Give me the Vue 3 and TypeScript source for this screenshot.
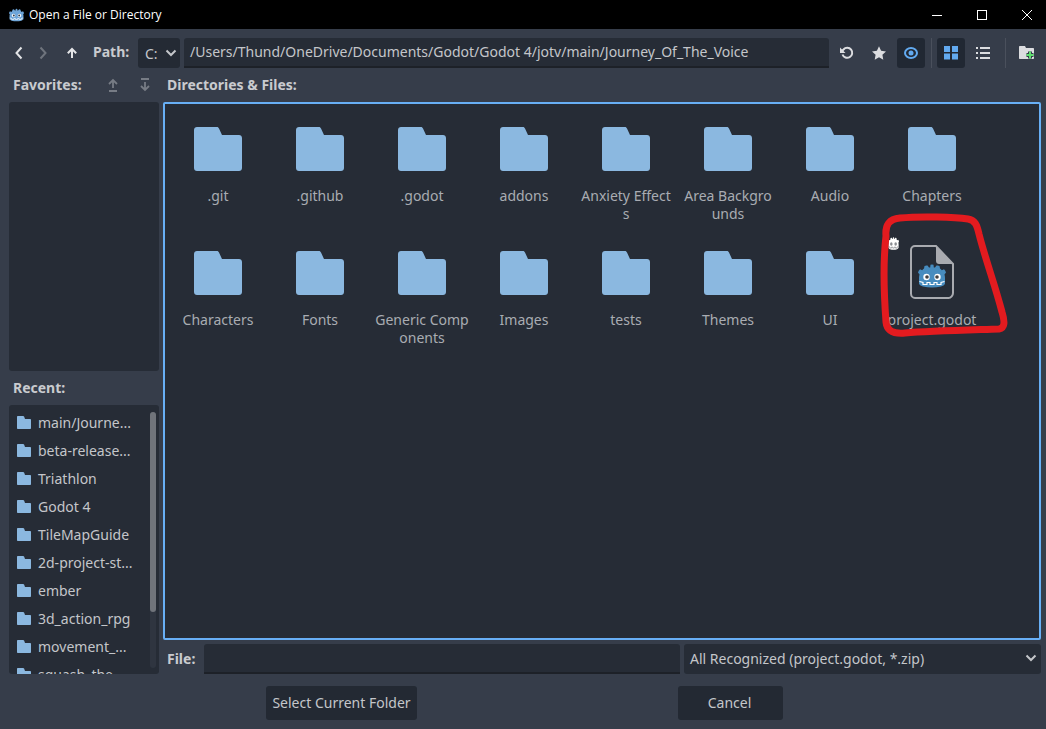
<script setup lang="ts">
const folders = [
  ".git", ".github", ".godot", "addons", "Anxiety Effects", "Area Backgrounds", "Audio", "Chapters",
  "Characters", "Fonts", "Generic Components", "Images", "tests", "Themes", "UI",
];

const recent = [
  "main/Journe...", "beta-release...", "Triathlon", "Godot 4", "TileMapGuide",
  "2d-project-st...", "ember", "3d_action_rpg", "movement_...", "squash_the",
];

const folderPath = "M3 0h20c1 0 1.600.6 2 1.500L28 8h17c1.700 0 3 1.300 3 3v30c0 1.700-1.300 3-3 3H3c-1.700 0-3-1.300-3-3V3c0-1.700 1.300-3 3-3z";
const smallFolderPath = "M1 0h5c.7 0 1 .3 1.200.8L8 3h5c.6 0 1 .4 1 1v8c0 .6-.4 1-1 1H1c-.6 0-1-.4-1-1V1c0-.6.4-1 1-1z";
const godotHead = "M6 4.500L6.500 2Q8 1.200 9.500 1.600L11 3.600L12.200 3.400L12.500 .8Q14 .2 15.500 .8L15.800 3.400L17 3.600L18.500 1.600Q20 1.200 21.500 2L22 4.500Q23 5.300 23.800 6.200L26 5.200Q27.500 6.500 28 8.500L26.500 10.500Q27 12 27 14V20Q26 21.500 23 22.500Q14 24.500 5 22.500Q2 21.500 1 20V14Q1 12 1.500 10.500L0 8.500Q.5 6.500 2 5.200L4.200 6.200Q5 5.300 6 4.500Z";
const godotMouth = "M1.500 17.500L5 18.500V20.500H9V18.500H12V20.500H16V18.500H19V20.500H23V18.500L26.500 17.500";
</script>

<template>
  <div class="window">
    <div class="titlebar">
      <svg class="title-logo" viewBox="0 0 28 24">
        <path :d="godotHead" fill="#6ea5d8" />
        <circle cx="8.500" cy="13" r="3.200" fill="#fff" />
        <circle cx="19.500" cy="13" r="3.200" fill="#fff" />
        <circle cx="9" cy="13" r="1.800" fill="#2a3a4c" />
        <circle cx="19" cy="13" r="1.800" fill="#2a3a4c" />
        <path :d="godotMouth" fill="none" stroke="#fff" stroke-width="1.300" />
      </svg>
      <span class="title-text">Open a File or Directory</span>
      <div class="win-buttons">
        <svg width="12" height="12" viewBox="0 0 12 12"><path d="M1 6.500h10" stroke="#fff" stroke-width="1" /></svg>
        <svg width="12" height="12" viewBox="0 0 12 12"><rect x="1.500" y="1.500" width="9" height="9" fill="none" stroke="#fff" /></svg>
        <svg width="12" height="12" viewBox="0 0 12 12"><path d="M1 1l10 10M11 1L1 11" stroke="#fff" stroke-width="1" /></svg>
      </div>
    </div>

    <div class="toolbar">
      <button class="nav">
        <svg width="10" height="14" viewBox="0 0 10 14"><path d="M7.500 1.500L2.500 7l5 5.500" fill="none" stroke="#e4e5e7" stroke-width="2" /></svg>
      </button>
      <button class="nav">
        <svg width="10" height="14" viewBox="0 0 10 14"><path d="M2.500 1.500l5 5.500-5 5.500" fill="none" stroke="#6f747d" stroke-width="2" /></svg>
      </button>
      <button class="nav up">
        <svg width="12" height="12" viewBox="0 0 12 12"><path d="M6 11V2.500M1.800 6.200L6 2l4.200 4.200" fill="none" stroke="#e4e5e7" stroke-width="2" /></svg>
      </button>
      <span class="label path-label">Path:</span>
      <div class="drive">C:
        <svg width="12" height="8" viewBox="0 0 12 8"><path d="M1.500 1.500L6 6l4.500-4.500" fill="none" stroke="#c4c6ca" stroke-width="2" /></svg>
      </div>
      <div class="input path-input">/Users/Thund/OneDrive/Documents/Godot/Godot 4/jotv/main/Journey_Of_The_Voice</div>
      <button class="tool">
        <svg width="16" height="16" viewBox="0 0 16 16"><path d="M3.500 9.500a5 5 0 1 0 1-5L2.500 6.500" fill="none" stroke="#dcdde0" stroke-width="2" /><path d="M1 2.500v5.500h5.500z" fill="#dcdde0" /></svg>
      </button>
      <button class="tool">
        <svg width="16" height="16" viewBox="0 0 16 16"><path d="M8 1.300l2.100 4.500 4.900.6-3.600 3.400.9 4.900L8 12.300l-4.300 2.400.9-4.900L1 6.400l4.900-.6z" fill="#dcdde0" /></svg>
      </button>
      <button class="tool active">
        <svg width="16" height="14" viewBox="0 0 16 14"><ellipse cx="8" cy="7" rx="6" ry="5" fill="none" stroke="#62aaf0" stroke-width="2" /><circle cx="8" cy="7" r="2.500" fill="#62aaf0" /></svg>
      </button>
      <div class="sep"></div>
      <button class="tool active">
        <svg width="14" height="14" viewBox="0 0 14 14" fill="#62aaf0"><rect width="6" height="6" /><rect x="8" width="6" height="6" /><rect y="7.500" width="6" height="6" /><rect x="8" y="7.500" width="6" height="6" /></svg>
      </button>
      <button class="tool">
        <svg width="14" height="14" viewBox="0 0 14 14" fill="#dcdde0"><rect y="1" width="2" height="2" /><rect x="4" y="1" width="10" height="2" /><rect y="6" width="2" height="2" /><rect x="4" y="6" width="10" height="2" /><rect y="11" width="2" height="2" /><rect x="4" y="11" width="10" height="2" /></svg>
      </button>
      <div class="sep wide"></div>
      <button class="tool">
        <svg width="16" height="14" viewBox="0 0 16 14">
          <path d="M1 0h5l1 2h7c.6 0 1 .4 1 1v9c0 .6-.4 1-1 1H1c-.6 0-1-.4-1-1V1c0-.6.4-1 1-1z" fill="#dcdde0" />
          <path d="M11 5.500v7M7.500 9h7" stroke="#363d4a" stroke-width="4" />
          <path d="M11 5.500v7M7.500 9h7" stroke="#5fe070" stroke-width="2" />
        </svg>
      </button>
    </div>

    <div class="content">
      <div class="side">
        <div class="side-head">
          <span class="label">Favorites:</span>
          <svg class="fav-up" width="12" height="14" viewBox="0 0 12 14"><path d="M6 10V2.500M2 6l4-4 4 4M2 13h8" fill="none" stroke="#777c85" stroke-width="1.800" /></svg>
          <svg class="fav-down" width="12" height="14" viewBox="0 0 12 14"><path d="M6 4v7.500M2 8l4 4 4-4M2 1h8" fill="none" stroke="#777c85" stroke-width="1.800" /></svg>
        </div>
        <div class="panel"></div>
        <div class="side-head"><span class="label">Recent:</span></div>
        <div class="panel recent">
          <div v-for="name in recent" :key="name" class="recent-row">
            <svg width="14" height="13" viewBox="0 0 14 13"><path :d="smallFolderPath" fill="#8bb8e0" /></svg>
            <span>{{ name }}</span>
          </div>
          <div class="scrollbar"><div class="thumb"></div></div>
        </div>
      </div>

      <div class="main">
        <div class="main-head"><span class="label">Directories &amp; Files:</span></div>
        <div class="files">
          <div v-for="name in folders" :key="name" class="file">
            <svg width="48" height="44" viewBox="0 0 48 44"><path :d="folderPath" fill="#8bb8e0" /></svg>
            <div class="file-name">{{ name }}</div>
          </div>
          <div class="file project">
            <svg class="doc" width="44" height="54" viewBox="0 0 44 54">
              <path d="M5 1h21l17 18v29c0 2.500-2 5-4.500 5H5c-2.200 0-4-2-4-4.500V5c0-2.200 1.800-4 4-4z" fill="#262c36" stroke="#a9abb0" stroke-width="2" />
              <path d="M26 1l17 18H29c-1.700 0-3-1.300-3-3z" fill="#a9abb0" />
              <g transform="translate(8 19)">
                <path :d="godotHead" fill="#478cbf" />
                <circle cx="8.500" cy="13" r="3.200" fill="#fff" />
                <circle cx="19.500" cy="13" r="3.200" fill="#fff" />
                <circle cx="9" cy="13" r="1.800" fill="#414042" />
                <circle cx="19" cy="13" r="1.800" fill="#414042" />
                <path :d="godotMouth" fill="none" stroke="#fff" stroke-width="1.200" />
              </g>
            </svg>
            <div class="file-name">project.godot</div>
          </div>
        </div>
        <div class="file-row">
          <span class="label">File:</span>
          <div class="input file-input"></div>
          <div class="filter">
            <span>All Recognized (project.godot, *.zip)</span>
            <svg width="12" height="8" viewBox="0 0 12 8"><path d="M1.500 1.500L6 6l4.500-4.500" fill="none" stroke="#c4c6ca" stroke-width="2" /></svg>
          </div>
        </div>
      </div>
    </div>

    <div class="footer">
      <button class="btn select">Select Current Folder</button>
      <button class="btn cancel">Cancel</button>
    </div>

    <!-- hand-drawn annotation and the stray icon on top of the grid -->
    <svg class="mini-logo" width="11" height="13" viewBox="0 0 28 24" preserveAspectRatio="none">
      <path :d="godotHead" fill="#fff" />
      <circle cx="8.500" cy="13" r="3.200" fill="#8a8d92" />
      <circle cx="19.500" cy="13" r="3.200" fill="#8a8d92" />
      <path :d="godotMouth" fill="none" stroke="#8a8d92" stroke-width="1.500" />
    </svg>
    <svg class="scribble" width="1046" height="729" viewBox="0 0 1046 729">
      <path d="M886 236C885 225 889 219 900 218C920 216 955 217 968 219C975 220 977 225 979 234C985 258 995 285 1002 312C1005 322 1005 328 999 329C970 330 930 331 905 333C893 334 887 331 886 322C884 295 883 262 886 236Z" fill="none" stroke="#e31b1f" stroke-width="7" stroke-linejoin="round" />
    </svg>
  </div>
</template>

<style>
html, body { margin: 0; background: #363d4a; }
</style>

<style scoped>
.window {
  position: relative;
  width: 1046px;
  height: 729px;
  overflow: hidden;
  display: flex;
  flex-direction: column;
  background: #363d4a;
  color: #c4c6ca;
  font: 14px "Noto Sans", sans-serif;
}
button { font: inherit; color: inherit; border: 0; padding: 0; background: none; display: flex; align-items: center; justify-content: center; }

.titlebar { height: 29px; background: #000; display: flex; align-items: center; padding-left: 9px; flex: none; }
.title-logo { width: 15px; height: 14px; }
.title-text { margin-left: 5px; font: 12px "Open Sans", sans-serif; color: #fff; }
.win-buttons { margin-left: auto; display: flex; gap: 33px; padding-right: 13px; }

.toolbar { height: 30px; margin-top: 9px; padding-left: 9px; display: flex; gap: 4px; flex: none; }
.nav { width: 20px; height: 30px; }
.up { margin-left: 4px; width: 22px; }
.label { font-weight: 700; color: #c9cbcf; }
.path-label { margin-left: 6px; line-height: 28px; width: 41px; }
.drive { width: 42px; height: 30px; box-sizing: border-box; background: #242a34; border-radius: 3px; display: flex; align-items: center; padding-left: 7px; gap: 7px; }
.input { background: #262c36; border-bottom: 2px solid #1d2128; box-sizing: border-box; border-radius: 3px 3px 0 0; }
.path-input { width: 645px; height: 30px; padding-left: 6px; line-height: 28px; }
.tool { width: 28px; height: 30px; border-radius: 3px; }
.tool.active { background: #212833; }
.sep { width: 4px; display: flex; justify-content: center; }
.sep::after { content: ""; width: 1px; height: 30px; background: #4a505c; }
.sep.wide { width: 8px; }

.content { display: flex; margin-left: 9px; gap: 4px; flex: none; }
.side { width: 150px; }
.side-head { height: 34px; box-sizing: border-box; padding: 0 0 2px 4px; position: relative; display: flex; align-items: center; }
.fav-up { position: absolute; left: 98px; top: 10px; }
.fav-down { position: absolute; left: 130px; top: 10px; }
.panel { height: 269px; background: #262c36; border-radius: 3px; position: relative; overflow: hidden; }
.recent { padding-top: 3px; box-sizing: border-box; }
.recent-row { height: 28px; display: flex; align-items: center; gap: 7px; padding-left: 8px; white-space: nowrap; }
.scrollbar { position: absolute; left: 141px; top: 7px; width: 6px; height: 256px; background: #2f3540; border-radius: 3px; }
.thumb { height: 200px; background: #70747b; border-radius: 3px; }

.main { width: 878px; }
.main-head { height: 34px; box-sizing: border-box; padding: 0 0 2px 4px; display: flex; align-items: center; }
.files {
  height: 538px;
  box-sizing: border-box;
  border: 2px solid #68aff5;
  background: #262c36;
  display: grid;
  grid-template-columns: repeat(8, 102px);
  grid-auto-rows: 124px;
  padding: 23px 0 0 2px;
  align-content: start;
  border-radius: 2px;
}
.file { display: flex; flex-direction: column; align-items: center; }
.file-name {
  width: 96px;
  margin-top: 16px;
  line-height: 18px;
  text-align: center;
  word-break: break-all;
  color: #a9acb2;
}
.project .doc { margin-top: -6px; }
.project .file-name { margin-top: 12px; }
.file-row { display: flex; margin-top: 4px; height: 30px; gap: 4px; align-items: center; }
.file-row .label { padding: 0 0 2px 4px; width: 33px; }
.file-input { width: 476px; height: 30px; }
.filter { flex: 1; height: 30px; box-sizing: border-box; background: #262c36; border-radius: 3px; display: flex; align-items: center; justify-content: space-between; padding: 0 4px 2px 6px; }

.footer { display: flex; margin-top: 12px; padding-left: 266px; gap: 261px; flex: none; }
.btn { height: 34px; box-sizing: border-box; padding-bottom: 2px; background: #232933; border-radius: 3px; }
.select { width: 151px; }
.cancel { width: 105px; padding-right: 2px; }

.mini-logo { position: absolute; left: 888px; top: 237px; }
.scribble { position: absolute; left: 0; top: 0; pointer-events: none; }
</style>
